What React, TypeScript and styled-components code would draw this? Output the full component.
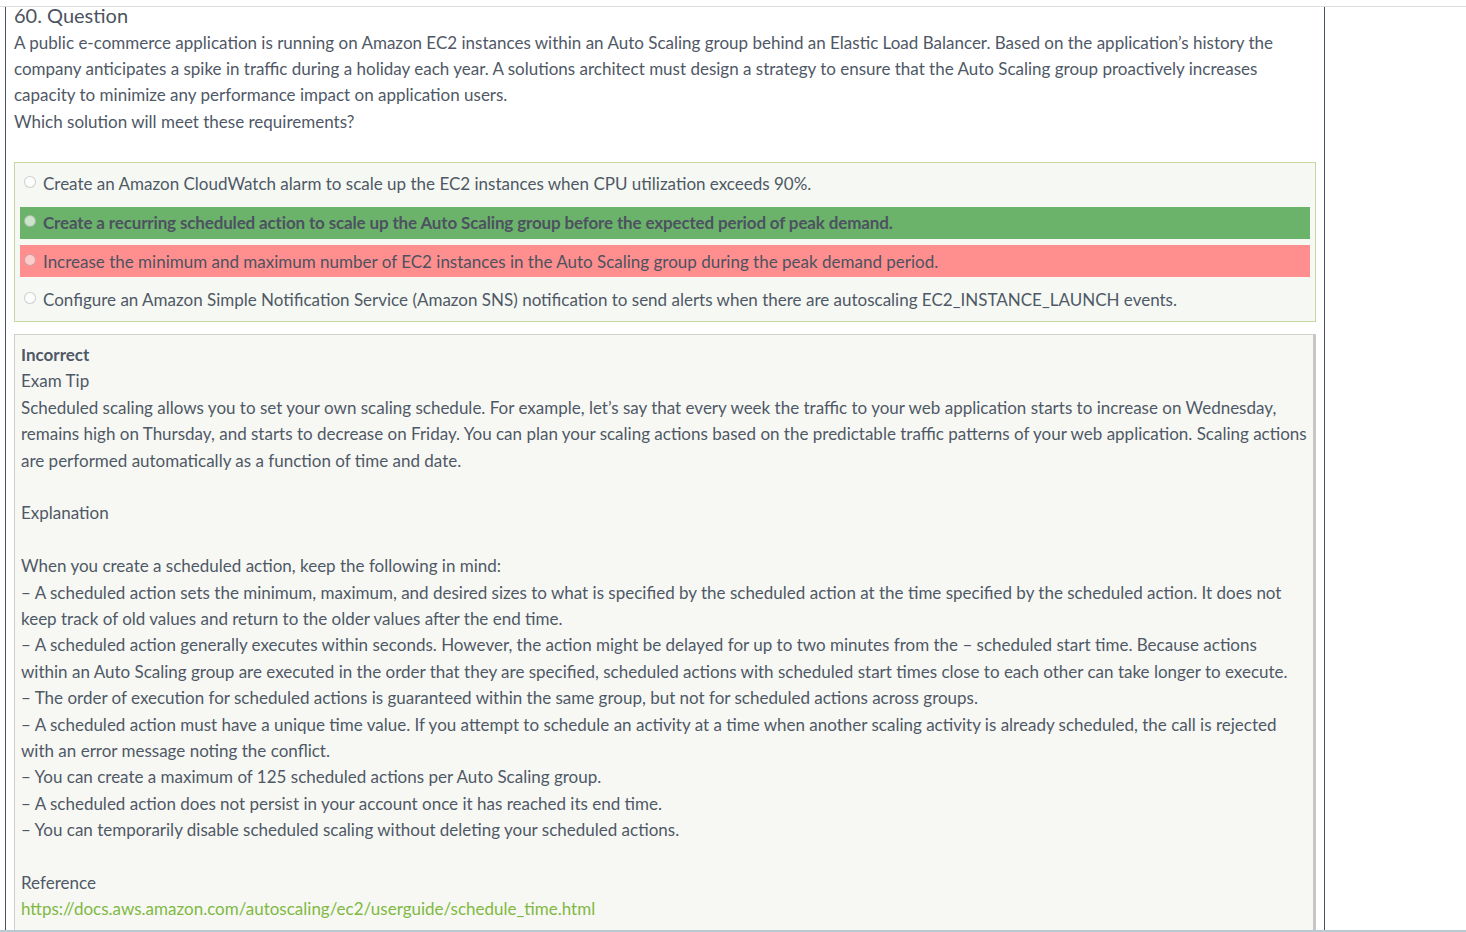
import React from "react";
import styled, { createGlobalStyle } from "styled-components";

const Global = createGlobalStyle`
  html, body { margin: 0; padding: 0; background: #ffffff; }
  body { font-family: "Lato", "Open Sans", sans-serif; color: #4f5866; }
  * { box-sizing: border-box; }
`;

const Page = styled.div`
  height: 100vh;
  display: flex;
  flex-direction: column;
  overflow: hidden;
`;

const TopRule = styled.div`
  margin-top: 6px;
  height: 1px;
  background: #dcdcdc;
  flex: none;
`;

const Frame = styled.div`
  flex: 1;
  min-height: 0;
  clip-path: inset(-20px -2px 0 -2px);
  margin-left: 5px;
  width: 1320px;
  border-left: 1px solid #4a5262;
  border-right: 1px solid #4a5262;
  padding: 0 8px 0 8px;
`;

const BottomRule = styled.div`
  height: 2px;
  background: #b9c9d3;
  flex: none;
`;

const Title = styled.div`
  font-size: 20px;
  line-height: 16px;
  margin-bottom: 7px;
  color: #4b5361;
`;

const Question = styled.p`
  margin: 0;
  font-size: 17px;
  line-height: 26.2px;
`;

const Options = styled.div`
  margin-top: 27px;
  border: 1px solid #c5d6a3;
  background: #f6f8f3;
  padding: 5px;
  display: flex;
  flex-direction: column;
  gap: 6.7px;
`;

type Tone = "plain" | "correct" | "wrong";

const OptionRow = styled.div<{ $tone: Tone }>`
  height: 32px;
  display: flex;
  align-items: center;
  padding-left: 4px;
  font-size: 17px;
  white-space: nowrap;
  background: ${(p) =>
    p.$tone === "correct" ? "#6bb36b" : p.$tone === "wrong" ? "#ff8f8f" : "transparent"};
  font-weight: ${(p) => (p.$tone === "correct" ? 700 : 400)};
  letter-spacing: ${(p) => (p.$tone === "correct" ? "-0.15px" : "0")};
  color: ${(p) => (p.$tone === "plain" ? "#4f5866" : "#4d5260")};
`;

const Radio = styled.span<{ $tone: Tone }>`
  width: 12px;
  height: 12px;
  border-radius: 50%;
  flex: none;
  margin-right: 7px;
  margin-top: -3px;
  border: 1px solid
    ${(p) => (p.$tone === "wrong" ? "rgba(120,80,90,0.35)" : "rgba(0,0,0,0.18)")};
  background: ${(p) =>
    p.$tone === "plain"
      ? "#fdfdfd"
      : p.$tone === "correct"
      ? "rgba(255,255,255,0.65)"
      : "rgba(255,255,255,0.55)"};
`;

const Explain = styled.div`
  margin-top: 12px;
  border: 1px solid #cfd1cd;
  border-right: 3px solid #c6c6c6;
  background: #f7f8f4;
  padding: 7px 6px 40px 6px;
  font-size: 17px;
  line-height: 26.4px;
`;

const Line = styled.div<{ $bold?: boolean }>`
  font-weight: ${(p) => (p.$bold ? 700 : 400)};
  min-height: 26.4px;
`;

const Link = styled.a`
  color: #80b843;
  text-decoration: none;
`;

const options: { text: string; tone: Tone }[] = [
  { text: "Create an Amazon CloudWatch alarm to scale up the EC2 instances when CPU utilization exceeds 90%.", tone: "plain" },
  { text: "Create a recurring scheduled action to scale up the Auto Scaling group before the expected period of peak demand.", tone: "correct" },
  { text: "Increase the minimum and maximum number of EC2 instances in the Auto Scaling group during the peak demand period.", tone: "wrong" },
  { text: "Configure an Amazon Simple Notification Service (Amazon SNS) notification to send alerts when there are autoscaling EC2_INSTANCE_LAUNCH events.", tone: "plain" },
];

const points = [
  "– A scheduled action sets the minimum, maximum, and desired sizes to what is specified by the scheduled action at the time specified by the scheduled action. It does not keep track of old values and return to the older values after the end time.",
  "– A scheduled action generally executes within seconds. However, the action might be delayed for up to two minutes from the  – scheduled start time. Because actions within an Auto Scaling group are executed in the order that they are specified, scheduled actions with scheduled start times close to each other can take longer to execute.",
  "– The order of execution for scheduled actions is guaranteed within the same group, but not for scheduled actions across groups.",
  "– A scheduled action must have a unique time value. If you attempt to schedule an activity at a time when another scaling activity is already scheduled, the call is rejected with an error message noting the conflict.",
  "– You can create a maximum of 125 scheduled actions per Auto Scaling group.",
  "– A scheduled action does not persist in your account once it has reached its end time.",
  "– You can temporarily disable scheduled scaling without deleting your scheduled actions.",
];

export default function App() {
  return (
    <Page>
      <Global />
      <TopRule />
      <Frame>
        <Title>60. Question</Title>
        <Question>
          A public e-commerce application is running on Amazon EC2 instances within an Auto Scaling group behind an
          Elastic Load Balancer. Based on the application’s history the company anticipates a spike in traffic during a
          holiday each year. A solutions architect must design a strategy to ensure that the Auto Scaling group
          proactively increases capacity to minimize any performance impact on application users.
        </Question>
        <Question>Which solution will meet these requirements?</Question>
        <Options>
          {options.map((o) => (
            <OptionRow key={o.text} $tone={o.tone}>
              <Radio $tone={o.tone} />
              {o.text}
            </OptionRow>
          ))}
        </Options>
        <Explain>
          <Line $bold>Incorrect</Line>
          <Line>Exam Tip</Line>
          <Line>
            Scheduled scaling allows you to set your own scaling schedule. For example, let’s say that every week the
            traffic to your web application starts to increase on Wednesday, remains high on Thursday, and starts to
            decrease on Friday. You can plan your scaling actions based on the predictable traffic patterns of your web
            application. Scaling actions are performed automatically as a function of time and date.
          </Line>
          <Line />
          <Line>Explanation</Line>
          <Line />
          <Line>When you create a scheduled action, keep the following in mind:</Line>
          {points.map((p) => (
            <Line key={p}>{p}</Line>
          ))}
          <Line />
          <Line>Reference</Line>
          <Line>
            <Link href="#">https://docs.aws.amazon.com/autoscaling/ec2/userguide/schedule_time.html</Link>
          </Line>
        </Explain>
      </Frame>
      <BottomRule />
    </Page>
  );
}
